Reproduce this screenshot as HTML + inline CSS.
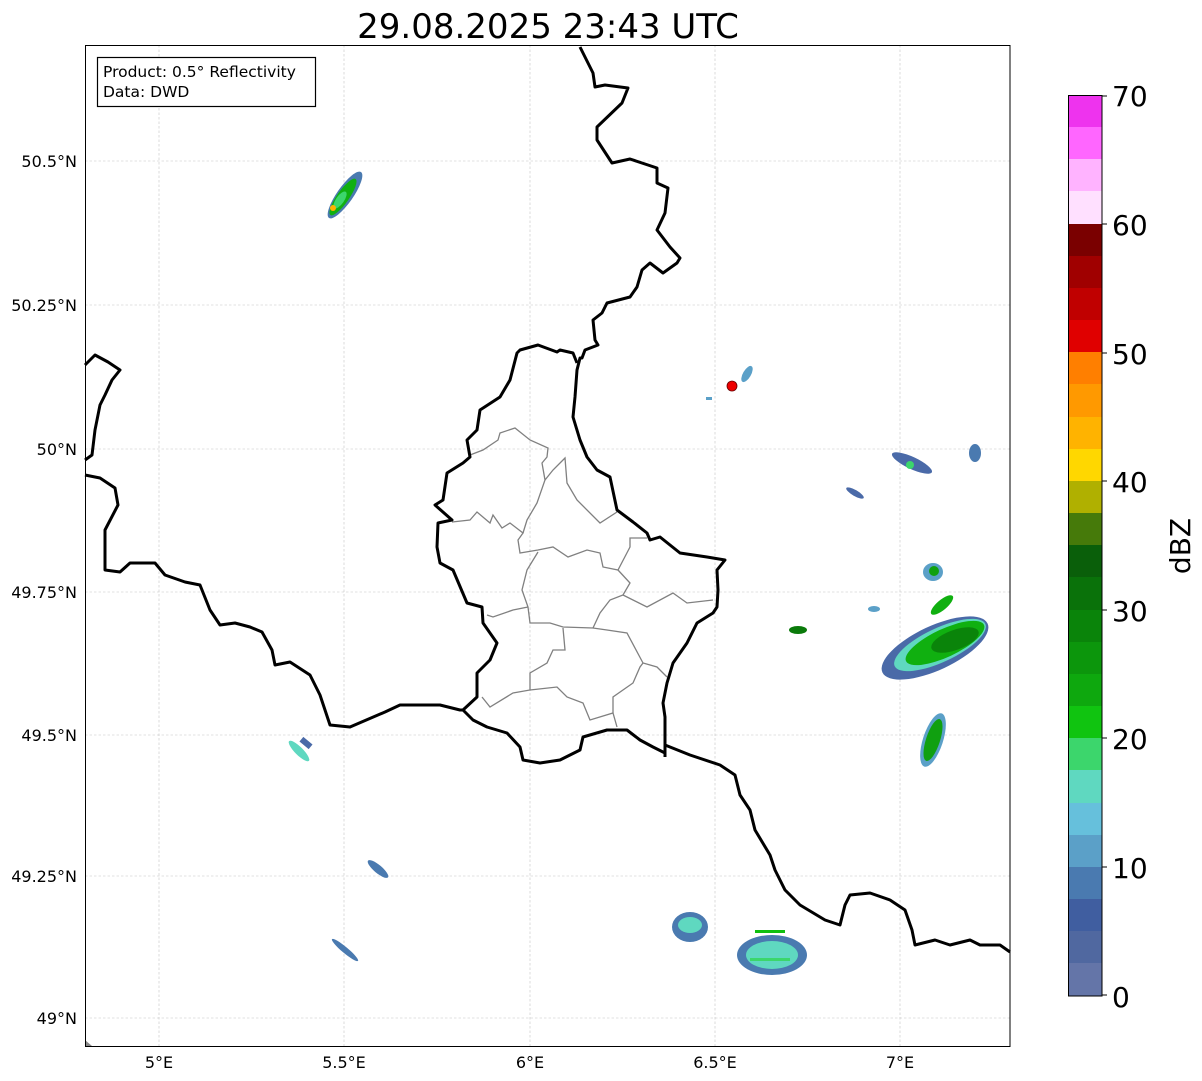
<!DOCTYPE html>
<html><head><meta charset="utf-8"><style>
html,body{margin:0;padding:0;background:#fff;}
svg{display:block;font-family:"DejaVu Sans","Liberation Sans",sans-serif;}
</style></head><body>
<svg width="1202" height="1081" viewBox="0 0 1202 1081" xmlns="http://www.w3.org/2000/svg">
<rect width="1202" height="1081" fill="#fff"/>
<text x="548" y="38" font-size="34" text-anchor="middle" fill="#000">29.08.2025 23:43 UTC</text>
<g stroke="#c4c4c4" stroke-width="0.6" stroke-dasharray="2.5,2">
<line x1="159" y1="45" x2="159" y2="1046"/><line x1="344" y1="45" x2="344" y2="1046"/><line x1="530" y1="45" x2="530" y2="1046"/><line x1="715" y1="45" x2="715" y2="1046"/><line x1="900" y1="45" x2="900" y2="1046"/>
<line x1="85" y1="161" x2="1010" y2="161"/><line x1="85" y1="305" x2="1010" y2="305"/><line x1="85" y1="449" x2="1010" y2="449"/><line x1="85" y1="592" x2="1010" y2="592"/><line x1="85" y1="735" x2="1010" y2="735"/><line x1="85" y1="876" x2="1010" y2="876"/><line x1="85" y1="1018" x2="1010" y2="1018"/>
</g>
<g fill="none" stroke="#808080" stroke-width="1.3">
<polyline points="470,455 483,450 498,440 500,433 515,428 530,440 548,448 547,457 542,463 545,480 537,503 527,520 523,533"/>
<polyline points="452,522 470,520 477,512 490,523 493,515 502,528 510,523 523,533 518,540 520,553 538,550 553,547 568,557 587,550 600,553 603,567 618,570 630,547 630,538 647,538"/>
<polyline points="545,480 553,470 565,458 567,483 577,500 600,523 617,512"/>
<polyline points="538,552 527,570 522,590 528,607 530,623 550,623 563,627 593,628 607,630 627,633 643,663 657,667 667,677"/>
<polyline points="618,570 630,583 623,595 610,600 600,613 593,628"/>
<polyline points="623,595 647,607 673,593 687,603 713,600"/>
<polyline points="528,607 513,610 493,617 487,615"/>
<polyline points="563,628 565,650 553,650 547,663 530,673 530,690 513,693 490,707 482,697"/>
<polyline points="530,690 557,687 567,697 583,703 590,720 613,713 617,727"/>
<polyline points="613,713 613,697 633,683 640,667 643,663"/>
</g>
<g fill="none" stroke="#000" stroke-width="3" stroke-linejoin="round">
<polyline points="580,47 593,73 595,87 605,85 628,88 622,103 597,127 597,140 612,163 630,159 657,168 657,183 668,188 665,213 657,230 670,247 680,258 677,263 663,273 650,263 642,270 637,287 630,297 607,303 602,313 593,320 595,340 598,345 585,350 582,358 580,358 577,370 575,397 573,417 580,440 587,457 597,470 610,477 617,510 633,522 647,533 650,540 660,537 680,553 707,557 725,560 717,570 718,590 717,607 713,613 697,623 687,643 673,663 667,683 663,703 665,717 665,757"/>
<polyline points="665,745 690,755 720,765 735,775 740,795 750,810 755,830 770,855 775,870 785,890 800,905 825,920 840,925 845,905 850,895 870,893 890,900 905,910 912,930 915,945 935,940 950,945 970,940 980,945 1000,945 1010,952"/>
<polyline points="577,363 573,353 560,350 557,352 538,345 520,350 517,353 510,380 500,397 480,410 477,430 467,440 470,457 463,463 447,473 443,500 435,505 452,520 438,523 437,547 440,563 453,570 467,603 482,607 483,623 497,643 490,660 477,673 477,697 463,710 473,720 487,727 507,733 520,747 523,760 540,763 560,760 580,750 583,737 607,730 627,730 640,740 653,747 665,753"/>
<polyline points="85,475 100,478 115,488 118,505 105,530 105,570 120,572 130,563 155,563 165,575 185,582 200,585 210,610 220,625 235,623 250,627 262,632 272,650 275,665 290,662 310,675 320,695 330,725 350,727 385,712 400,705 420,705 440,705 460,710 463,710"/>
<polyline points="85,365 95,355 108,362 120,370 112,380 105,395 100,405 95,430 92,455 85,460"/>
</g>
<g>
<ellipse cx="345" cy="195" rx="28" ry="8" transform="rotate(-55 345 195)" fill="#4a7ab0"/>
<ellipse cx="343" cy="197" rx="22" ry="6" transform="rotate(-55 343 197)" fill="#10b010"/>
<ellipse cx="340" cy="200" rx="10" ry="4" transform="rotate(-55 340 200)" fill="#3cd66c"/>
<circle cx="333" cy="208" r="3" fill="#ffb300"/>
<ellipse cx="747" cy="374" rx="9" ry="4" transform="rotate(-60 747 374)" fill="#5ba0c8"/>
<rect x="706" y="397" width="6" height="3" fill="#5ba0c8"/>
<circle cx="732" cy="386" r="5" fill="#ee0000" stroke="#600" stroke-width="0.8"/>
<ellipse cx="912" cy="463" rx="22" ry="6" transform="rotate(25 912 463)" fill="#4a6aa8"/>
<circle cx="910" cy="465" r="4" fill="#3cd66c"/>
<ellipse cx="975" cy="453" rx="6" ry="9" fill="#4a7ab0"/>
<ellipse cx="855" cy="493" rx="10" ry="3" transform="rotate(30 855 493)" fill="#4a6aa8"/>
<ellipse cx="933" cy="572" rx="10" ry="9" fill="#5ba0c8"/><circle cx="934" cy="571" r="5" fill="#10a010"/>
<ellipse cx="874" cy="609" rx="6" ry="3" fill="#5ba0c8"/>
<ellipse cx="798" cy="630" rx="9" ry="4" fill="#0a7a0a"/>
<ellipse cx="935" cy="648" rx="58" ry="22" transform="rotate(-25 935 648)" fill="#4a6aa8"/>
<ellipse cx="940" cy="645" rx="50" ry="17" transform="rotate(-25 940 645)" fill="#5fd8c0"/>
<ellipse cx="945" cy="643" rx="43" ry="14" transform="rotate(-25 945 643)" fill="#10b010"/>
<ellipse cx="955" cy="640" rx="25" ry="10" transform="rotate(-20 955 640)" fill="#0a840a"/>
<ellipse cx="942" cy="605" rx="14" ry="5" transform="rotate(-40 942 605)" fill="#10b010"/>
<ellipse cx="933" cy="740" rx="10" ry="28" transform="rotate(18 933 740)" fill="#5ba0c8"/>
<ellipse cx="933" cy="740" rx="7" ry="22" transform="rotate(18 933 740)" fill="#10a010"/>
<ellipse cx="299" cy="751" rx="14" ry="4" transform="rotate(45 299 751)" fill="#5fd8c0"/>
<rect x="300" y="740" width="12" height="6" transform="rotate(40 306 743)" fill="#4a6aa8"/>
<ellipse cx="378" cy="869" rx="13" ry="4" transform="rotate(40 378 869)" fill="#4a7ab0"/>
<ellipse cx="345" cy="950" rx="17" ry="3" transform="rotate(40 345 950)" fill="#4a7ab0"/>
<ellipse cx="690" cy="927" rx="18" ry="15" fill="#4a7ab0"/><ellipse cx="690" cy="925" rx="12" ry="8" fill="#5fd8c0"/>
<ellipse cx="772" cy="955" rx="35" ry="20" fill="#4a7ab0"/><ellipse cx="772" cy="955" rx="26" ry="14" fill="#5fd8c0"/><rect x="755" y="930" width="30" height="3" fill="#10c010"/><rect x="750" y="958" width="40" height="3" fill="#3cd66c"/>
<polygon points="85,1040 92,1046 85,1046" fill="#888"/>
</g>
<rect x="85.5" y="45.5" width="924.5" height="1001" fill="none" stroke="#000" stroke-width="1"/>
<rect x="97.5" y="57.5" width="218" height="49" fill="#fff" stroke="#000" stroke-width="1.2"/>
<text x="103" y="77" font-size="15.5">Product: 0.5° Reflectivity</text>
<text x="103" y="97" font-size="15.5">Data: DWD</text>
<g font-size="16" text-anchor="end">
<text x="77" y="167">50.5°N</text><text x="77" y="311">50.25°N</text><text x="77" y="455">50°N</text><text x="77" y="598">49.75°N</text><text x="77" y="741">49.5°N</text><text x="77" y="882">49.25°N</text><text x="77" y="1024">49°N</text>
</g>
<g font-size="16" text-anchor="middle">
<text x="159" y="1068">5°E</text><text x="344" y="1068">5.5°E</text><text x="530" y="1068">6°E</text><text x="715" y="1068">6.5°E</text><text x="900" y="1068">7°E</text>
</g>
<g>
<rect x="1068" y="95" width="34" height="33" fill="#ee33ee"/>
<rect x="1068" y="127" width="34" height="33" fill="#ff66ff"/>
<rect x="1068" y="159" width="34" height="33" fill="#ffb3ff"/>
<rect x="1068" y="191" width="34" height="33" fill="#ffe0ff"/>
<rect x="1068" y="224" width="34" height="33" fill="#7a0000"/>
<rect x="1068" y="256" width="34" height="33" fill="#a00000"/>
<rect x="1068" y="288" width="34" height="33" fill="#c00000"/>
<rect x="1068" y="320" width="34" height="33" fill="#e00000"/>
<rect x="1068" y="352" width="34" height="33" fill="#ff7f00"/>
<rect x="1068" y="384" width="34" height="33" fill="#ff9900"/>
<rect x="1068" y="417" width="34" height="33" fill="#ffb300"/>
<rect x="1068" y="449" width="34" height="33" fill="#ffd700"/>
<rect x="1068" y="481" width="34" height="33" fill="#b0b000"/>
<rect x="1068" y="513" width="34" height="33" fill="#467a0a"/>
<rect x="1068" y="545" width="34" height="33" fill="#0a5f0a"/>
<rect x="1068" y="577" width="34" height="33" fill="#0a720a"/>
<rect x="1068" y="610" width="34" height="33" fill="#0a840a"/>
<rect x="1068" y="642" width="34" height="33" fill="#0c960c"/>
<rect x="1068" y="674" width="34" height="33" fill="#0ea80e"/>
<rect x="1068" y="706" width="34" height="33" fill="#10c410"/>
<rect x="1068" y="738" width="34" height="33" fill="#3cd66c"/>
<rect x="1068" y="770" width="34" height="33" fill="#5fd8c0"/>
<rect x="1068" y="803" width="34" height="33" fill="#66c0dc"/>
<rect x="1068" y="835" width="34" height="33" fill="#5ba0c8"/>
<rect x="1068" y="867" width="34" height="33" fill="#4a7ab0"/>
<rect x="1068" y="899" width="34" height="33" fill="#405ea0"/>
<rect x="1068" y="931" width="34" height="33" fill="#5068a0"/>
<rect x="1068" y="963" width="34" height="33" fill="#6475a8"/>
<rect x="1068.5" y="95.5" width="33.5" height="900.5" fill="none" stroke="#000" stroke-width="1"/>
</g>
<g font-size="28">
<text x="1112" y="106">70</text><text x="1112" y="235">60</text><text x="1112" y="364">50</text><text x="1112" y="492">40</text><text x="1112" y="621">30</text><text x="1112" y="749">20</text><text x="1112" y="878">10</text><text x="1112" y="1007">0</text>
</g>
<g stroke="#000" stroke-width="1">
<line x1="1102" y1="96" x2="1107" y2="96"/><line x1="1102" y1="224" x2="1107" y2="224"/><line x1="1102" y1="353" x2="1107" y2="353"/><line x1="1102" y1="481" x2="1107" y2="481"/><line x1="1102" y1="610" x2="1107" y2="610"/><line x1="1102" y1="738" x2="1107" y2="738"/><line x1="1102" y1="867" x2="1107" y2="867"/><line x1="1102" y1="995" x2="1107" y2="995"/>
</g>
<text x="0" y="0" font-size="28" text-anchor="middle" transform="translate(1190 546) rotate(-90)">dBZ</text>
</svg>
</body></html>
